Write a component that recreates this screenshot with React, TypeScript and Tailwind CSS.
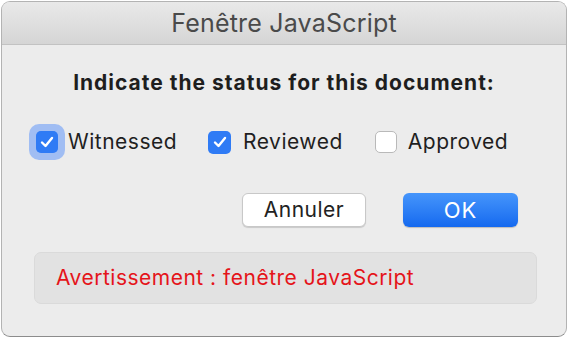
import React from "react";

const Check = () => (
  <svg viewBox="0 0 22 22" className="w-[22px] h-[22px]">
    <path d="M6 11.5 L9.5 15 L16 7" fill="none" stroke="white" strokeWidth="2.4" strokeLinecap="round" strokeLinejoin="round" />
  </svg>
);

export default function App() {
  const font = { fontFamily: 'Inter, "Liberation Sans", Arial, sans-serif' };
  return (
    <div className="w-[568px] h-[338px] bg-white p-[1px]" style={font}>
      <div className="w-[566px] h-[336px] rounded-[9px] border border-[#b3b3b3] border-b-[#8c8c8c] overflow-hidden flex flex-col bg-[#ececec]">
        <div className="h-[43px] shrink-0 flex items-center justify-center bg-gradient-to-b from-[#e9e9e9] to-[#d5d5d5] border-b border-[#c2c2c2]">
          <span className="text-[25px] tracking-[0.2px] text-[#4a4a4a] leading-none mt-[1px]">Fenêtre JavaScript</span>
        </div>
        <div className="flex flex-col">
          <div className="mt-[26px] text-center text-[21px] tracking-[1px] font-bold text-[#1e1e1e] leading-[24px]">
            Indicate the status for this document:
          </div>
          <div className="mt-[35px] h-[24px] flex items-center text-[21px] tracking-[0.5px] text-[#1f1f1f]">
            <div className="ml-[34px] relative w-[22px] h-[22px] rounded-[5px] bg-[#2f7bf5]">
              <div className="absolute -inset-[7px] rounded-[10px] bg-[#8db2f5]/80" />
              <div className="absolute inset-0 rounded-[5px] bg-[#2f7bf5] flex items-center justify-center">
                <Check />
              </div>
            </div>
            <span className="ml-[10px]">Witnessed</span>
            <div className="ml-[31px] w-[23px] h-[23px] rounded-[5px] bg-[#2f7bf5] flex items-center justify-center">
              <Check />
            </div>
            <span className="ml-[12px]">Reviewed</span>
            <div className="ml-[32px] w-[22px] h-[22px] rounded-[5px] bg-white border border-[#b9b9b9]" />
            <span className="ml-[11px]">Approved</span>
          </div>
          <div className="mt-[39px] flex">
            <div className="ml-[240px] w-[124px] h-[34px] rounded-[6px] bg-white border border-[#c8c8c8] shadow-[0_1px_1px_rgba(0,0,0,0.15)] flex items-center justify-center text-[21px] tracking-[0.5px] text-[#222]">
              Annuler
            </div>
            <div className="ml-[37px] w-[115px] h-[34px] rounded-[6px] bg-gradient-to-b from-[#4595fb] to-[#1469ef] shadow-[0_1px_1px_rgba(0,0,0,0.2)] flex items-center justify-center text-[22px] tracking-[1px] text-white">
              OK
            </div>
          </div>
          <div className="mt-[25px] ml-[32px] w-[503px] h-[52px] rounded-[7px] bg-[#e2e2e2] border border-[#dadada] flex items-center">
            <span className="ml-[21px] text-[21px] tracking-[0.5px] text-[#e5141a]">Avertissement : fenêtre JavaScript</span>
          </div>
        </div>
      </div>
    </div>
  );
}
